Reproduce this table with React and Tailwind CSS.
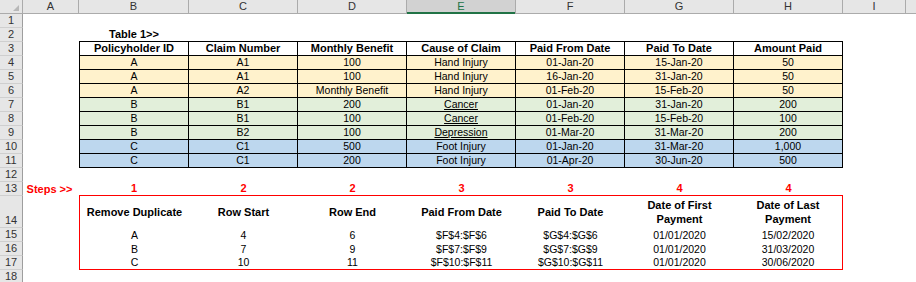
import React from "react";

const W = ["w-[56px]", "w-[110px]", "w-[109px]", "w-[109px]", "w-[109px]", "w-[109px]", "w-[109px]", "w-[109px]", "w-[63px]"];
const LETTERS = ["A", "B", "C", "D", "E", "F", "G", "H", "I"];

const t1 = [
  ["A", "A1", "100", "Hand Injury", "01-Jan-20", "15-Jan-20", "50", "y"],
  ["A", "A1", "100", "Hand Injury", "16-Jan-20", "31-Jan-20", "50", "y"],
  ["A", "A2", "Monthly Benefit", "Hand Injury", "01-Feb-20", "15-Feb-20", "50", "y"],
  ["B", "B1", "200", "Cancer", "01-Jan-20", "31-Jan-20", "200", "g"],
  ["B", "B1", "100", "Cancer", "01-Feb-20", "15-Feb-20", "100", "g"],
  ["B", "B2", "100", "Depression", "01-Mar-20", "31-Mar-20", "200", "g"],
  ["C", "C1", "500", "Foot Injury", "01-Jan-20", "31-Mar-20", "1,000", "b"],
  ["C", "C1", "200", "Foot Injury", "01-Apr-20", "30-Jun-20", "500", "b"],
];
const FILL = { y: "bg-[#fff2cc]", g: "bg-[#e2efda]", b: "bg-[#bdd7ee]" };

const t1Head = ["Policyholder ID", "Claim Number", "Monthly Benefit", "Cause of Claim", "Paid From Date", "Paid To Date", "Amount Paid"];
const steps = ["1", "2", "2", "3", "3", "4", "4"];
const t2Head = [["Remove Duplicate"], ["Row Start"], ["Row End"], ["Paid From Date"], ["Paid To Date"], ["Date of First", "Payment"], ["Date of Last", "Payment"]];
const t2 = [
  ["A", "4", "6", "$F$4:$F$6", "$G$4:$G$6", "01/01/2020", "15/02/2020"],
  ["B", "7", "9", "$F$7:$F$9", "$G$7:$G$9", "01/01/2020", "31/03/2020"],
  ["C", "10", "11", "$F$10:$F$11", "$G$10:$G$11", "01/01/2020", "30/06/2020"],
];

function RowHead({ n, tall }) {
  return (
    <div
      className={`w-[23px] shrink-0 bg-[#e6e6e6] border-r border-b border-r-[#9e9e9e] border-b-[#cfcfcf] flex justify-center text-[11px] leading-[13px] text-[#333] ${
        tall ? "items-end" : "items-center"
      }`}
    >
      {n}
    </div>
  );
}

function Blank({ i, className = "" }) {
  return <div className={`${W[i]} shrink-0 ${className}`} />;
}

function Row({ n, tall, children }) {
  return (
    <div className={`flex ${tall ? "h-[32px]" : "h-[14px]"}`}>
      <RowHead n={n} tall={tall} />
      {children}
      <div className="flex-1" />
    </div>
  );
}

function Cell({ i, className = "", children }) {
  return (
    <div className={`${W[i]} shrink-0 flex items-center justify-center leading-[13px] ${className}`}>{children}</div>
  );
}

export default function App() {
  return (
    <div className="w-[916px] h-[282px] overflow-hidden bg-white font-['Liberation_Sans',Arial,sans-serif] text-black select-none">
      {/* column headers */}
      <div className="flex h-[14px] bg-[#e6e6e6] border-b border-[#ababab]">
        <div className="w-[23px] shrink-0 border-r border-[#ababab] relative">
          <svg className="absolute right-[3px] bottom-[2px]" width="6" height="6" viewBox="0 0 6 6">
            <polygon points="6,0 6,6 0,6" fill="#b8b8b8" />
          </svg>
        </div>
        {LETTERS.map((l, i) =>
          l === "E" ? (
            <div
              key={l}
              className={`${W[i]} shrink-0 bg-[#d2d2d2] border-r border-[#ababab] flex items-center justify-center text-[11px] text-[#217346] relative`}
            >
              {l}
              <div className="absolute left-0 right-0 -bottom-px h-[2px] bg-[#217346]" />
            </div>
          ) : (
            <div key={l} className={`${W[i]} shrink-0 border-r border-[#ababab] flex items-center justify-center text-[11px] text-[#333]`}>
              {l}
            </div>
          )
        )}
        <div className="flex-1" />
      </div>

      <Row n={1} />
      <Row n={2}>
        <Blank i={0} />
        <Cell i={1} className="font-bold text-[11px] border-b border-black">Table 1&gt;&gt;</Cell>
        {[2, 3, 4, 5, 6, 7].map((i) => (
          <Blank key={i} i={i} className="border-b border-black" />
        ))}
      </Row>
      <Row n={3}>
        <Blank i={0} />
        {t1Head.map((h, k) => (
          <Cell key={k} i={k + 1} className={`font-bold text-[11px] border-r border-b border-black ${k === 0 ? "border-l" : ""}`}>
            {h}
          </Cell>
        ))}
      </Row>
      {t1.map((r, ri) => (
        <Row key={ri} n={ri + 4}>
          <Blank i={0} />
          {r.slice(0, 7).map((v, k) => (
            <Cell key={k} i={k + 1} className={`text-[10.5px] border-r border-b border-black ${FILL[r[7]]} ${k === 0 ? "border-l" : ""}`}>
              {k === 3 && (v === "Cancer" || v === "Depression") ? (
                <span className="underline underline-offset-1">{v}</span>
              ) : (
                v
              )}
            </Cell>
          ))}
        </Row>
      ))}
      <Row n={12} />
      <Row n={13}>
        <Cell i={0} className="font-bold text-[11px] text-[#ff0000] pr-[3px]">Steps &gt;&gt;</Cell>
        {steps.map((s, k) => (
          <Cell key={k} i={k + 1} className="font-bold text-[11px] text-[#ff0000] border-b border-[#ff0000]">
            {s}
          </Cell>
        ))}
      </Row>
      <Row n={14} tall>
        <Blank i={0} />
        {t2Head.map((h, k) => (
          <div
            key={k}
            className={`${W[k + 1]} shrink-0 flex flex-col items-center justify-center font-bold text-[11px] leading-[14px] ${
              k === 0 ? "border-l border-[#ff0000]" : ""
            } ${k === 6 ? "border-r border-[#ff0000]" : ""}`}
          >
            {h.map((line, j) => (
              <span key={j}>{line}</span>
            ))}
          </div>
        ))}
      </Row>
      {t2.map((r, ri) => (
        <Row key={ri} n={ri + 15}>
          <Blank i={0} />
          {r.map((v, k) => (
            <Cell
              key={k}
              i={k + 1}
              className={`text-[10.5px] border-[#ff0000] ${k === 0 ? "border-l" : ""} ${k === 6 ? "border-r" : ""} ${
                ri === 2 ? "border-b" : ""
              }`}
            >
              {v}
            </Cell>
          ))}
        </Row>
      ))}
      <Row n={18} />
    </div>
  );
}
